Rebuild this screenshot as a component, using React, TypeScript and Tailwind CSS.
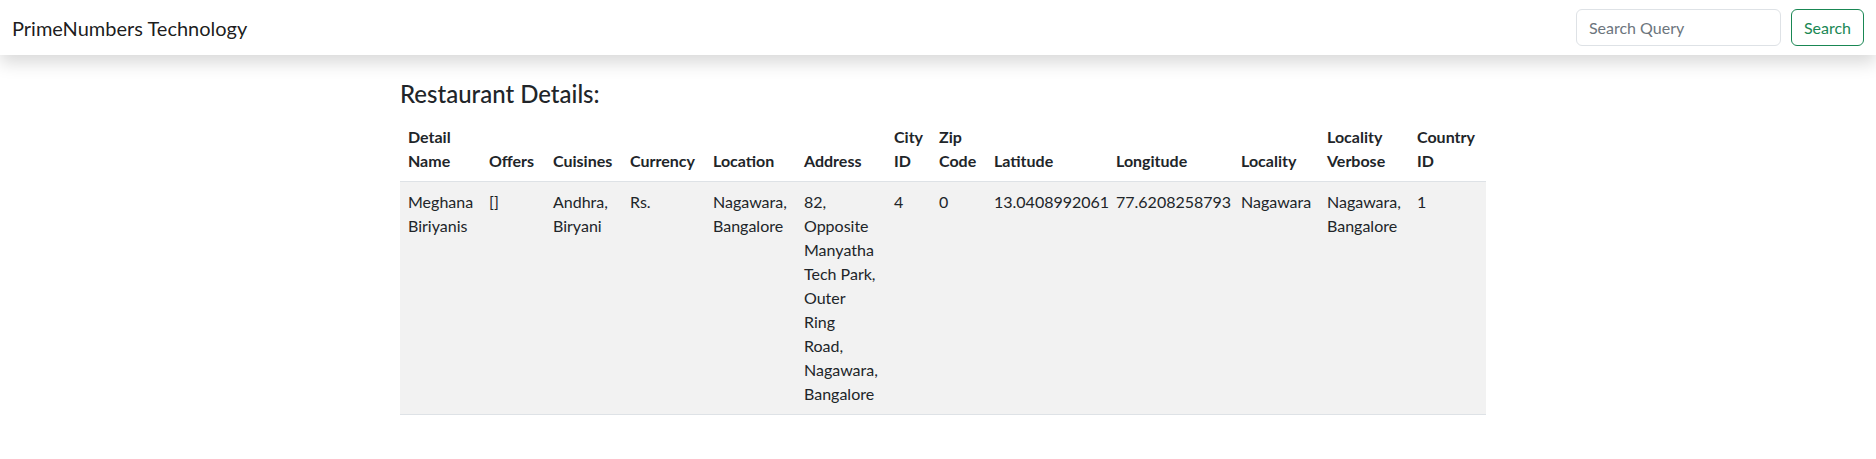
import React from 'react';

interface Column {
  key: string;
  label: string;
  width: string;
}

const columns: Column[] = [
  { key: 'name', label: 'Detail Name', width: 'w-[81px]' },
  { key: 'offers', label: 'Offers', width: 'w-[64px]' },
  { key: 'cuisines', label: 'Cuisines', width: 'w-[77px]' },
  { key: 'currency', label: 'Currency', width: 'w-[83px]' },
  { key: 'location', label: 'Location', width: 'w-[91px]' },
  { key: 'address', label: 'Address', width: 'w-[90px]' },
  { key: 'city_id', label: 'City ID', width: 'w-[45px]' },
  { key: 'zip', label: 'Zip Code', width: 'w-[55px]' },
  { key: 'latitude', label: 'Latitude', width: 'w-[122px]' },
  { key: 'longitude', label: 'Longitude', width: 'w-[125px]' },
  { key: 'locality', label: 'Locality', width: 'w-[86px]' },
  { key: 'locality_verbose', label: 'Locality Verbose', width: 'w-[90px]' },
  { key: 'country_id', label: 'Country ID', width: 'w-[77px]' },
];

const restaurant: Record<string, string> = {
  name: 'Meghana Biriyanis',
  offers: '[]',
  cuisines: 'Andhra, Biryani',
  currency: 'Rs.',
  location: 'Nagawara, Bangalore',
  address: '82, Opposite Manyatha Tech Park, Outer Ring Road, Nagawara, Bangalore',
  city_id: '4',
  zip: '0',
  latitude: '13.0408992061',
  longitude: '77.6208258793',
  locality: 'Nagawara',
  locality_verbose: 'Nagawara, Bangalore',
  country_id: '1',
};

const App: React.FC = () => {
  return (
    <div className="min-h-screen bg-white font-['Lato','Noto_Sans',sans-serif] text-[#212529]">
      {/* Navbar */}
      <nav className="relative z-10 flex h-[55px] items-center justify-between bg-white px-3 shadow-[0_8px_16px_rgba(0,0,0,0.15)]">
        <span className="text-[20px] text-black/90">PrimeNumbers Technology</span>
        <form className="flex items-center" onSubmit={(e) => e.preventDefault()}>
          <input
            type="search"
            placeholder="Search Query"
            className="mr-[10px] h-[37px] w-[205px] rounded-[6px] border border-[#dee2e6] px-3 text-[16px] text-[#212529] placeholder:text-[#6c757d] outline-none"
          />
          <button
            type="submit"
            className="h-[37px] rounded-[6px] border border-[#198754] px-3 text-[16px] text-[#198754]"
          >
            Search
          </button>
        </form>
      </nav>

      {/* Content */}
      <div className="flex justify-center pl-[10px] pt-[25px]">
        <div>
          <h4 className="mb-2 text-[24px] font-medium leading-[1.2]">Restaurant Details:</h4>
          <table className="w-[1086px] table-fixed border-collapse text-[16px] leading-[24px]">
            <thead>
              <tr className="border-b border-[#dee2e6]">
                {columns.map((col) => (
                  <th key={col.key} className={`${col.width} p-2 text-left align-bottom font-bold`}>
                    {col.label}
                  </th>
                ))}
              </tr>
            </thead>
            <tbody>
              <tr className="border-b border-[#dee2e6] bg-[#f2f2f2]">
                {columns.map((col) => (
                  <td key={col.key} className="p-2 align-top">
                    {restaurant[col.key]}
                  </td>
                ))}
              </tr>
            </tbody>
          </table>
        </div>
      </div>
    </div>
  );
};

export default App;
